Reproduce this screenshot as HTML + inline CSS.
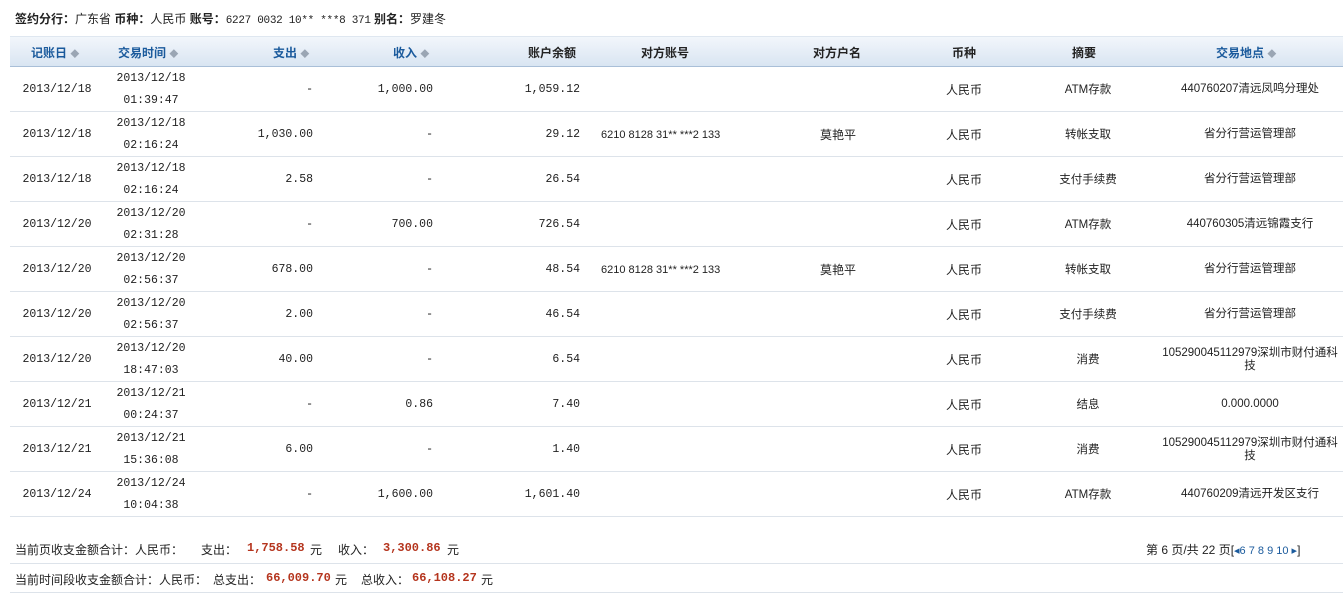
<!DOCTYPE html>
<html><head><meta charset="utf-8"><style>
*{margin:0;padding:0;box-sizing:border-box}
body{width:1343px;height:594px;background:#fff;position:relative;overflow:hidden;font-family:"Liberation Sans","Noto Sans CJK SC",sans-serif;font-size:12px;color:#222}
.a{position:absolute;white-space:nowrap}
.m{font-family:"Liberation Mono","Noto Sans CJK SC",monospace;font-size:11.5px}
.hd{position:absolute;left:10px;top:36px;width:1333px;height:31px;background:linear-gradient(#f2f6fb,#d9e5f2);border-top:1px solid #dfe7f0;border-bottom:1px solid #a9bfd8}
.h{position:absolute;top:44px;font-weight:bold;font-size:12px;white-space:nowrap}
.blue{color:#1a5a9c}
.ar{color:#9aa6b4;font-size:9px;font-weight:normal}
.row{position:absolute;left:10px;width:1333px;height:45px;border-bottom:1px solid #dde3ea}
.c{position:absolute;top:0;height:45px;display:flex;align-items:center;line-height:22px;text-align:center}
.red{color:#b5351e;font-weight:bold;font-family:"Liberation Mono",monospace}
</style></head><body>
<div class="a" style="left:15px;top:10px;font-size:12px"><b>签约分行：</b>广东省 <b>币种：</b>人民币 <b>账号：</b><span class="m" style="font-size:11px;letter-spacing:-0.3px">6227 0032 10** ***8 371</span> <b>别名：</b>罗建冬</div>
<div class="hd"></div>
<div class="h blue" style="left:31px">记账日 <span class="ar">◆</span></div>
<div class="h blue" style="left:118px">交易时间 <span class="ar">◆</span></div>
<div class="h blue" style="left:273px">支出 <span class="ar">◆</span></div>
<div class="h blue" style="left:393px">收入 <span class="ar">◆</span></div>
<div class="h" style="left:528px">账户余额</div>
<div class="h" style="left:641px">对方账号</div>
<div class="h" style="left:813px">对方户名</div>
<div class="h" style="left:952px">币种</div>
<div class="h" style="left:1072px">摘要</div>
<div class="h blue" style="left:1216px">交易地点 <span class="ar">◆</span></div>
<div id="rows"></div>
<script>
var d=[
["2013/12/18","01:39:47","-","1,000.00","1,059.12","","","ATM存款","440760207清远凤鸣分理处"],
["2013/12/18","02:16:24","1,030.00","-","29.12","6210 8128 31** ***2 133","莫艳平","转帐支取","省分行营运管理部"],
["2013/12/18","02:16:24","2.58","-","26.54","","","支付手续费","省分行营运管理部"],
["2013/12/20","02:31:28","-","700.00","726.54","","","ATM存款","440760305清远锦霞支行"],
["2013/12/20","02:56:37","678.00","-","48.54","6210 8128 31** ***2 133","莫艳平","转帐支取","省分行营运管理部"],
["2013/12/20","02:56:37","2.00","-","46.54","","","支付手续费","省分行营运管理部"],
["2013/12/20","18:47:03","40.00","-","6.54","","","消费","105290045112979深圳市财付通科<br>技"],
["2013/12/21","00:24:37","-","0.86","7.40","","","结息","0.000.0000"],
["2013/12/21","15:36:08","6.00","-","1.40","","","消费","105290045112979深圳市财付通科<br>技"],
["2013/12/24","10:04:38","-","1,600.00","1,601.40","","","ATM存款","440760209清远开发区支行"]];
var h="";
d.forEach(function(r,i){
var t=67+i*45;
h+='<div class="row" style="top:'+t+'px">'+
'<div class="c m" style="left:0;width:94px;justify-content:center">'+r[0]+'</div>'+
'<div class="c m" style="left:94px;width:94px;justify-content:center">'+r[0]+'<br>'+r[1]+'</div>'+
'<div class="c m" style="left:200px;width:103px;justify-content:flex-end">'+r[2]+'</div>'+
'<div class="c m" style="left:320px;width:103px;justify-content:flex-end">'+r[3]+'</div>'+
'<div class="c m" style="left:440px;width:130px;justify-content:flex-end">'+r[4]+'</div>'+
'<div class="c" style="left:591px;width:160px;font-size:11px;font-family:Liberation Sans,sans-serif">'+r[5]+'</div>'+
'<div class="c" style="left:778px;width:100px;justify-content:center">'+r[6]+'</div>'+
'<div class="c" style="left:904px;width:100px;justify-content:center">人民币</div>'+
'<div class="c" style="left:1028px;width:100px;justify-content:center;font-size:11.5px">'+r[7]+'</div>'+
'<div class="c" style="left:1150px;width:180px;justify-content:center;font-size:11.5px;line-height:13px">'+r[8]+'</div>'+
'</div>';});
document.getElementById('rows').innerHTML=h;
</script>
<div class="a" style="left:15px;top:541px">当前页收支金额合计：人民币：</div>
<div class="a" style="left:201px;top:541px">支出：</div>
<div class="a red" style="left:247px;top:541px">1,758.58</div>
<div class="a" style="left:310px;top:541px">元</div>
<div class="a" style="left:338px;top:541px">收入：</div>
<div class="a red" style="left:383px;top:541px">3,300.86</div>
<div class="a" style="left:447px;top:541px">元</div>
<div class="a" style="left:1146px;top:541px">第 6 页/共 22 页[<span style="color:#1a5a9c;font-size:11px">◂6 7 8 9 10 ▸</span>]</div>
<div class="a" style="left:10px;top:563px;width:1333px;border-top:1px solid #dde3ea"></div>
<div class="a" style="left:15px;top:571px">当前时间段收支金额合计：人民币：</div>
<div class="a" style="left:213px;top:571px">总支出：</div>
<div class="a red" style="left:266px;top:571px">66,009.70</div>
<div class="a" style="left:335px;top:571px">元</div>
<div class="a" style="left:361px;top:571px">总收入：</div>
<div class="a red" style="left:412px;top:571px">66,108.27</div>
<div class="a" style="left:481px;top:571px">元</div>
<div class="a" style="left:10px;top:592px;width:1333px;border-top:1px solid #dde3ea"></div>
</body></html>
